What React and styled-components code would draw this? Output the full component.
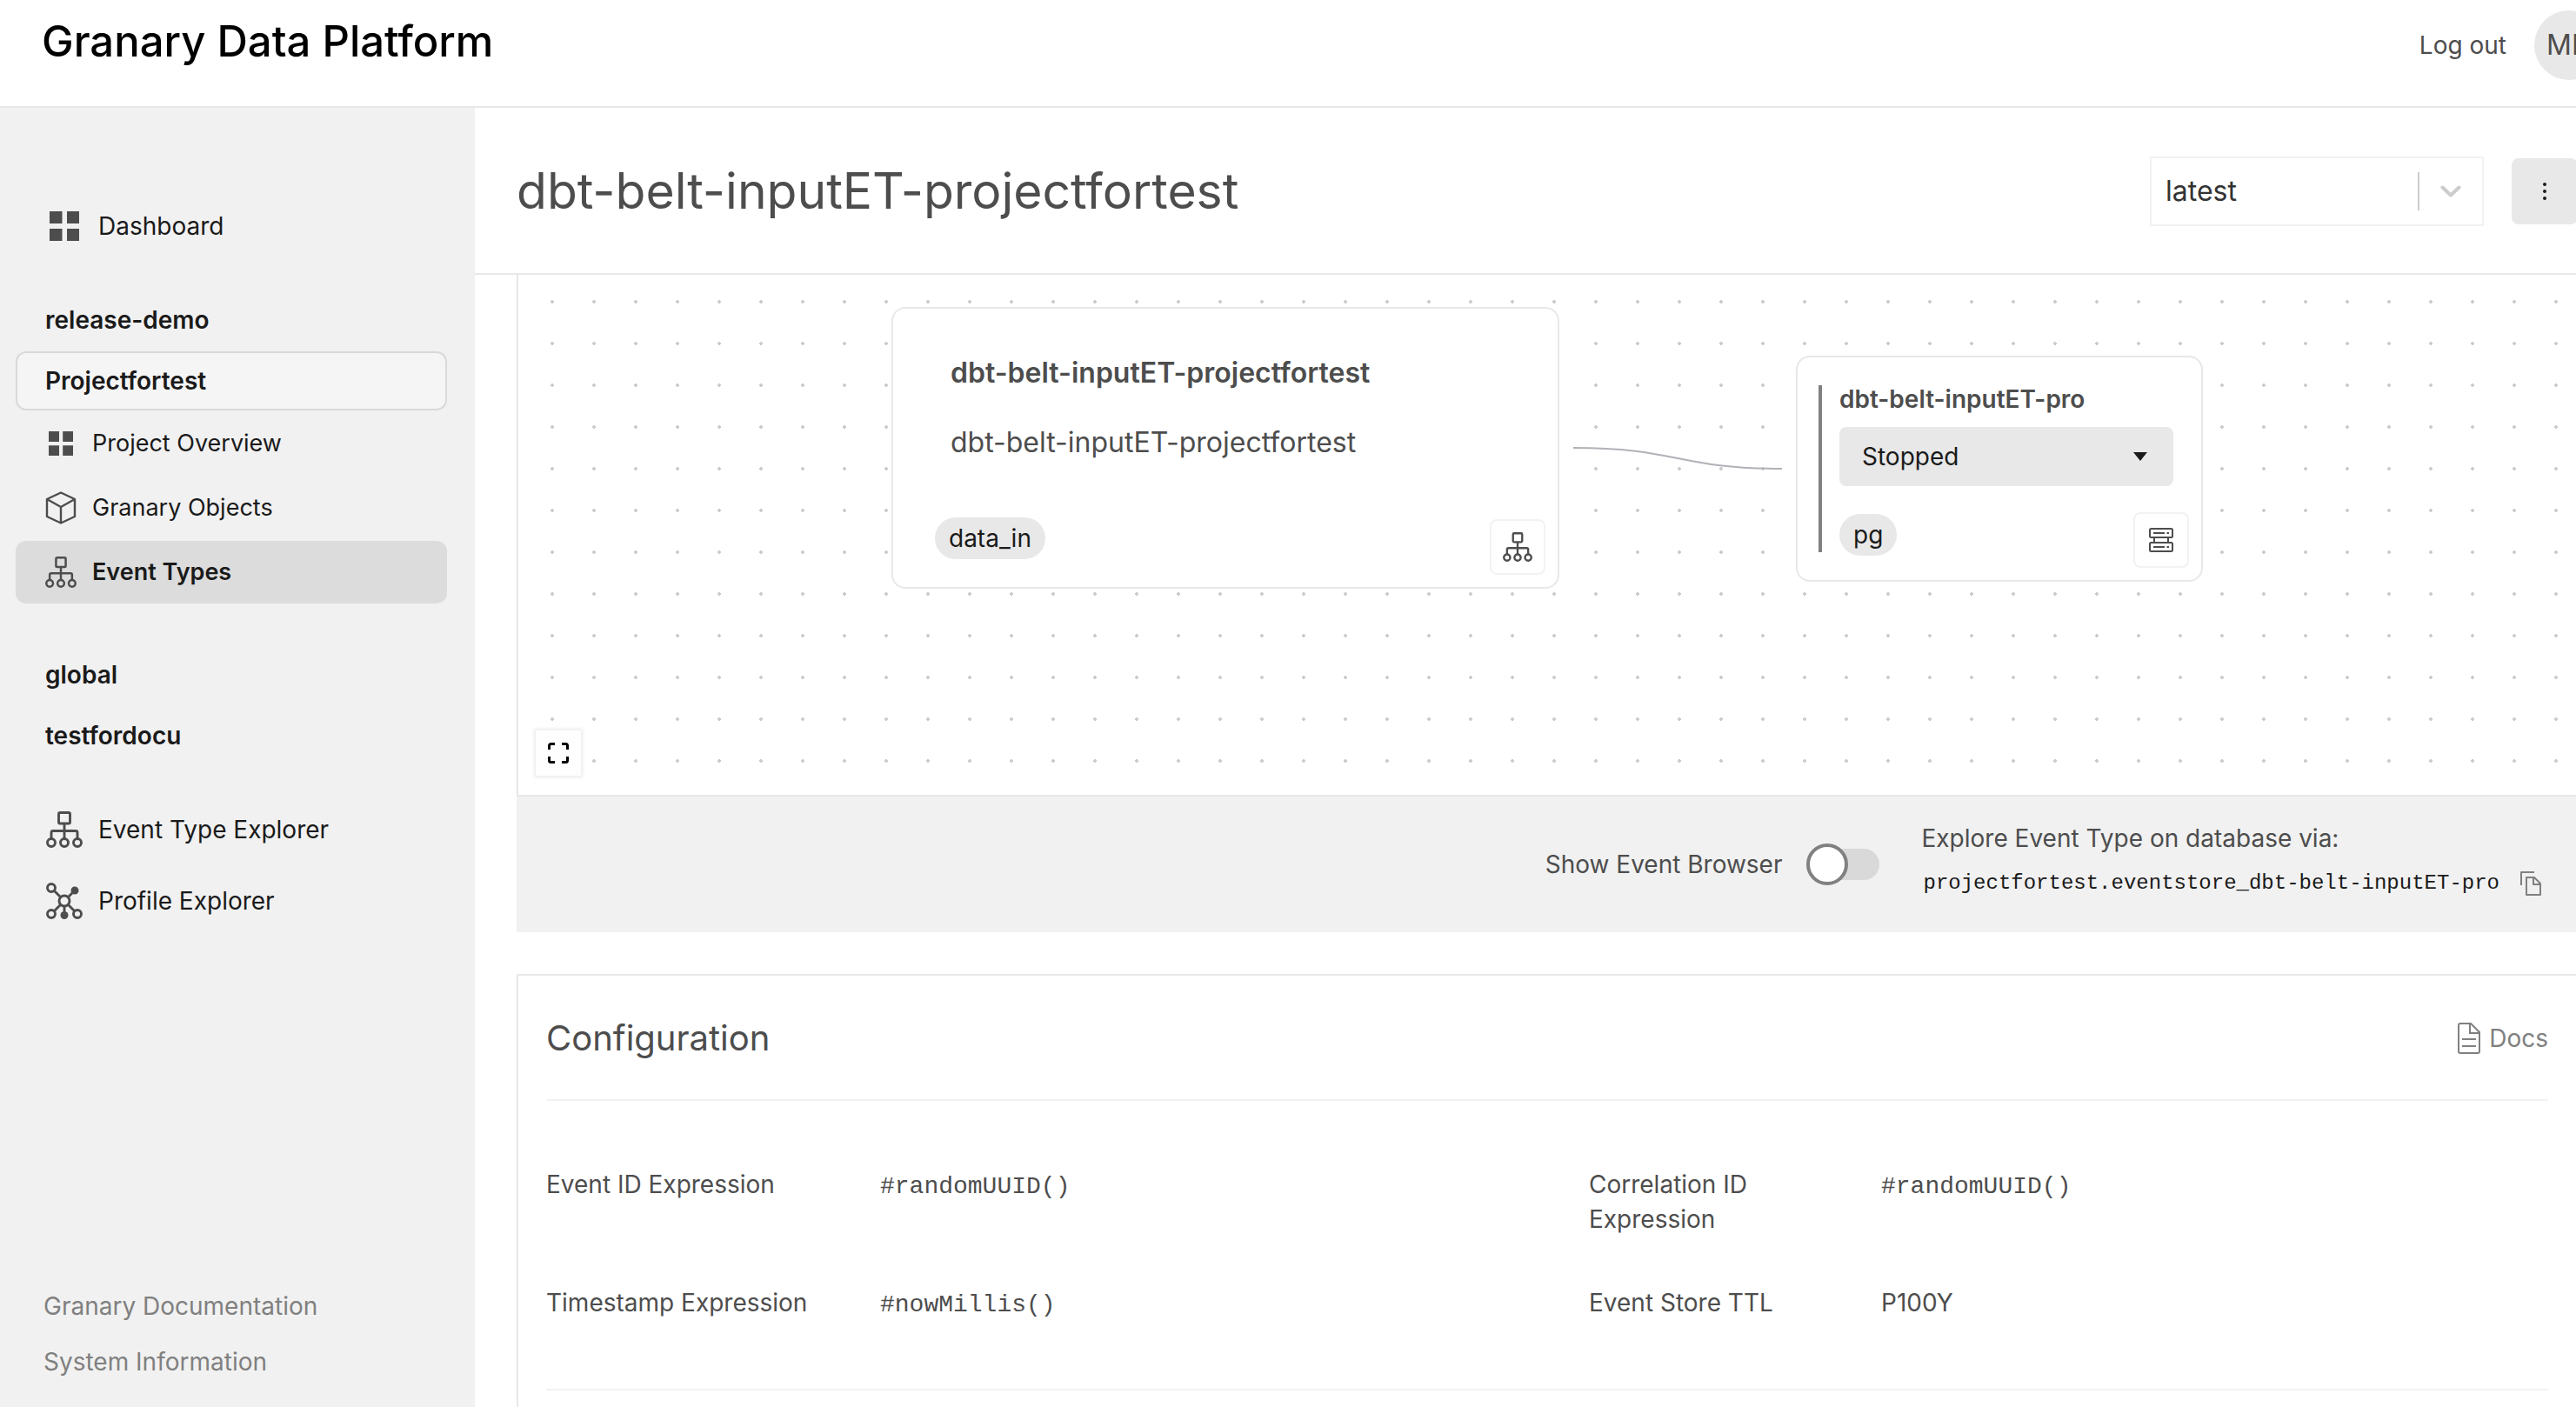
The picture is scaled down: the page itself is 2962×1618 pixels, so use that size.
import React, { useState } from "react";
import styled, { createGlobalStyle, css } from "styled-components";

const GlobalStyle = createGlobalStyle`
  *, *::before, *::after { box-sizing: border-box; }
  body {
    margin: 0;
    overflow: hidden;
    background: #fff;
    color: #4d4d4d;
    font-family: Inter, "Liberation Sans", sans-serif;
    font-size: 28px;
    line-height: 40px;
  }
  h1, h2, h3, p, ul, dl, dd { margin: 0; padding: 0; }
  ul { list-style: none; }
  a { color: inherit; text-decoration: none; }
  button, select, input { font: inherit; color: inherit; margin: 0; }
  svg { display: block; flex: none; }
`;

/* The workspace is slightly wider than the window and runs off its right side. */
const Shell = styled.div`
  display: flex;
  flex-direction: column;
  width: calc(100% + 50px);
  height: 100vh;
  overflow: hidden;
`;

const Header = styled.header`
  display: flex;
  align-items: flex-start;
  justify-content: space-between;
  height: 124px;
  padding: 12px 18px 0 48px;
  border-bottom: 2px solid #e8e8e8;
`;

const Brand = styled.a`
  color: #000;
  font-size: 49px;
  font-weight: 500;
  line-height: 72px;
`;

const Account = styled.div`
  display: flex;
  align-items: center;
  gap: 32px;
`;

const TextButton = styled.button`
  padding: 0;
  border: 0;
  background: none;
  cursor: pointer;
`;

const Avatar = styled.div`
  display: flex;
  align-items: center;
  width: 80px;
  height: 80px;
  padding-left: 14px;
  border-radius: 50%;
  background: #e8e8e8;
  font-size: 32px;
`;

const Body = styled.div`
  display: flex;
  flex: 1;
  min-height: 0;
`;

const Sidebar = styled.nav`
  display: flex;
  flex: none;
  flex-direction: column;
  width: 546px;
  padding: 96px 32px 20px 18px;
  background: #f1f1f1;
  color: #1a1a1a;
`;

const NavList = styled.ul`
  display: flex;
  flex-direction: column;
  gap: 2px;
  margin-top: ${(p) => p.$space || 0}px;
`;

const MainLink = styled.a`
  display: flex;
  align-items: center;
  gap: 18px;
  height: 80px;
  padding-left: 35px;

  svg { width: 42px; color: #4d4d4d; }
`;

const ProjectLink = styled.a`
  display: flex;
  align-items: center;
  height: 68px;
  padding-left: 32px;
  border: 2px solid transparent;
  border-radius: 12px;
  font-weight: 600;
  ${(p) => p.$open && css`
    border-color: #d9d9d9;
    background: #f5f5f5;
  `}
`;

const SubLink = styled.a`
  display: flex;
  align-items: center;
  gap: 18px;
  height: 72px;
  padding-left: 34px;
  border-radius: 12px;
  font-size: 27px;
  ${(p) => p.$active && css`
    background: #dcdcdc;
    font-weight: 600;
  `}

  svg { width: 36px; color: #4d4d4d; }
`;

const FooterLinks = styled.ul`
  margin-top: auto;
  padding-left: 32px;
  color: #808080;
  line-height: 64px;
`;

const Main = styled.main`
  display: flex;
  flex: 1;
  flex-direction: column;
  min-width: 0;
`;

const TitleBar = styled.div`
  display: flex;
  flex: none;
  align-items: center;
  gap: 32px;
  height: 192px;
  padding: 2px 48px 0;
  border-bottom: 2px solid #e8e8e8;
`;

const PageTitle = styled.h1`
  flex: 1;
  font-size: 57px;
  font-weight: 400;
  line-height: 72px;
`;

const Picker = styled.div`
  display: grid;
  align-items: center;
  width: 384px;

  > * { grid-area: 1 / 1; }
`;

const PickerSelect = styled.select`
  width: 100%;
  border: ${(p) => (p.$filled ? "0" : "2px solid #f2f2f2")};
  border-radius: ${(p) => (p.$filled ? 8 : 0)}px;
  padding: 0 ${(p) => (p.$filled ? 26 : 16)}px;
  height: ${(p) => (p.$filled ? 68 : 80)}px;
  background: ${(p) => (p.$filled ? "#e8e8e8" : "#fff")};
  color: ${(p) => (p.$filled ? "#1a1a1a" : "#333")};
  font-size: ${(p) => (p.$filled ? 28 : 32)}px;
  appearance: none;
`;

const PickerMark = styled.span`
  display: flex;
  align-items: center;
  justify-self: end;
  height: 44px;
  padding: 0 ${(p) => (p.$filled ? 30 : 26)}px 0 24px;
  border-left: ${(p) => (p.$filled ? "0" : "2px solid #ccc")};
  pointer-events: none;
`;

const MoreButton = styled.button`
  display: flex;
  align-items: center;
  justify-content: center;
  width: 76px;
  height: 76px;
  padding: 0;
  border: 0;
  border-radius: 8px;
  background: #e8e8e8;
  color: #1a1a1a;
`;

const Content = styled.div`
  display: flex;
  flex: 1;
  flex-direction: column;
  gap: 48px;
  min-height: 0;
  padding: 0 48px;
`;

const FlowPanel = styled.section`
  flex: none;
`;

const Canvas = styled.div`
  position: relative;
  height: 600px;
  border: 2px solid #e8e8e8;
  border-top: 0;
  background: radial-gradient(circle, #ccc 2px, transparent 2px) 15px 7px / 48px 48px;
`;

const Edge = styled.svg`
  position: absolute;
  top: 198px;
  left: 1213px;
`;

const Node = styled.article`
  position: absolute;
  top: ${(p) => p.$y}px;
  left: ${(p) => p.$x}px;
  display: flex;
  flex-direction: column;
  width: ${(p) => p.$w}px;
  border: 2px solid #e8e8e8;
  border-radius: 16px;
  background: #fff;
`;

const SourceNode = styled(Node)`
  padding: 50px 14px 14px 48px;
`;

const SourceText = styled.div`
  display: flex;
  flex-direction: column;
  gap: 32px;
  padding: 0 18px;
  font-size: 32px;
  line-height: 48px;
`;

const SourceTitle = styled.h3`
  font-size: 32px;
  font-weight: 600;
  line-height: 48px;
`;

const SourceFoot = styled.div`
  display: flex;
  align-items: flex-end;
  justify-content: space-between;
  height: 66px;
  margin-top: 62px;
`;

const TargetNode = styled(Node)`
  padding: 32px 14px 14px 24px;
`;

const TargetBody = styled.div`
  display: flex;
  flex-direction: column;
  gap: 12px;
  padding-left: 24px;
  background: linear-gradient(#808080, #808080) left top / 4px 192px no-repeat;
`;

const TargetTitle = styled.h3`
  padding-bottom: 4px;
  font-size: 28px;
  font-weight: 600;
  line-height: 32px;
`;

const Chip = styled.span`
  display: flex;
  align-items: center;
  align-self: flex-start;
  height: 48px;
  padding: 0 16px;
  border-radius: 24px;
  background: #e8e8e8;
  color: #1a1a1a;
`;

const TargetFoot = styled.div`
  display: flex;
  justify-content: space-between;
  margin-top: 18px;

  ${Chip} { margin-top: 2px; }
`;

const NodeButton = styled.button`
  display: flex;
  align-items: center;
  justify-content: center;
  width: 64px;
  height: 64px;
  padding: 0;
  border: 2px solid #f2f2f2;
  border-radius: 8px;
  background: #fff;
`;

const FitButton = styled.button`
  position: absolute;
  bottom: 22px;
  left: 20px;
  display: flex;
  align-items: center;
  justify-content: center;
  width: 52px;
  height: 52px;
  padding: 0;
  border: 0;
  background: #fefefe;
  box-shadow: 0 0 4px 2px rgba(0, 0, 0, 0.08);
  color: #000;
`;

const AccessBar = styled.div`
  display: flex;
  align-items: center;
  justify-content: flex-end;
  gap: 48px;
  height: 156px;
  padding-right: 42px;
  background: #f1f1f1;
`;

const ToggleLabel = styled.label`
  display: flex;
  align-items: center;
  gap: 28px;
`;

const Toggle = styled.input`
  display: grid;
  align-items: center;
  width: 84px;
  height: 48px;
  appearance: none;

  &::before, &::after { content: ""; grid-area: 1 / 1; }
  &::before {
    height: 36px;
    margin-left: 8px;
    border-radius: 18px;
    background: #d9d9d9;
  }
  &::after {
    width: 48px;
    height: 48px;
    border: 4px solid #808080;
    border-radius: 50%;
    background: #fff;
  }
  &:checked::after { justify-self: end; }
`;

const Access = styled.div`
  display: flex;
  flex-direction: column;
  gap: 12px;
  padding-bottom: 8px;
`;

const AccessPath = styled.div`
  display: flex;
  align-items: center;
  gap: 24px;
  padding-left: 2px;
  color: #1a1a1a;
`;

const Code = styled.code`
  font-family: "Liberation Mono", monospace;
  font-size: ${(p) => (p.$small ? 24 : 28)}px;
`;

const CopyButton = styled(TextButton)`
  color: #808080;
`;

const Card = styled.section`
  flex: 1 0 auto;
  padding: 0 32px;
  border: 2px solid #e8e8e8;
  border-bottom: 0;
`;

const CardHead = styled.div`
  display: flex;
  align-items: center;
  justify-content: space-between;
  height: 144px;
  padding-top: 2px;
  border-bottom: 2px solid #f2f2f2;
`;

const CardTitle = styled.h2`
  font-size: 40px;
  font-weight: 400;
  line-height: 56px;
`;

const DocsLink = styled.a`
  display: flex;
  align-items: center;
  gap: 10px;
  color: #808080;
`;

const Settings = styled.dl`
  display: grid;
  grid-template-columns: 1fr 1fr;
  gap: 56px 96px;
  padding: 76px 0;
  border-bottom: 2px solid #f2f2f2;
`;

const Setting = styled.div`
  display: flex;
  align-items: flex-start;
`;

const SettingName = styled.dt`
  flex: none;
  width: ${(p) => (p.$wide ? 384 : 336)}px;
  padding-right: 48px;
`;

const GridIcon = () => (
  <svg height="34" viewBox="0 0 34 34" fill="currentColor" aria-hidden="true">
    <path d="M0 0h14.500v14H0zM20 0h14v14H20zM0 20h14.500v14H0zM20 20h14v14H20z" />
  </svg>
);

const SmallGridIcon = () => (
  <svg height="28" viewBox="0 0 28 28" fill="currentColor" aria-hidden="true">
    <path d="M0 0h12v12H0zM16.200 0H28v12H16.200zM0 16.200h12V28H0zM16.200 16.200H28V28H16.200z" />
  </svg>
);

const CubeIcon = () => (
  <svg height="38" viewBox="0 0 36 38" fill="none" stroke="currentColor" strokeWidth="2.400" strokeLinejoin="round" aria-hidden="true">
    <path d="M18 1.500 34 9v20l-16 7.500L2 29V9zM2 9l16 9 16-9M18 18v18.500" />
  </svg>
);

const TreeIcon = ({ size = 42 }) => (
  <svg width={size} height={size} viewBox="0 0 42 42" fill="none" stroke="currentColor" strokeWidth="2.900" aria-hidden="true">
    <rect x="14.500" y="1.500" width="13" height="12.500" rx="1.500" />
    <path d="M21 14v17M6 31v-6.500a2 2 0 0 1 2-2h26a2 2 0 0 1 2 2V31" />
    <circle cx="6" cy="36" r="4.500" />
    <circle cx="21" cy="36" r="4.500" />
    <circle cx="36" cy="36" r="4.500" />
  </svg>
);

const HubIcon = () => (
  <svg height="42" viewBox="0 0 42 42" fill="none" stroke="currentColor" strokeWidth="2.900" aria-hidden="true">
    <circle cx="21" cy="21" r="6" />
    <circle cx="6" cy="6" r="4.500" />
    <circle cx="6" cy="36" r="4.500" />
    <circle cx="36" cy="36" r="4.500" />
    <path d="m9 9 8 8M32 10l-7 7M17 25l-8 8M25 25l8 8M21 27v9" />
    <circle cx="33" cy="9" r="4.500" fill="currentColor" stroke="none" />
    <circle cx="21" cy="37.500" r="4.500" fill="currentColor" stroke="none" />
  </svg>
);

const ServerIcon = () => (
  <svg width="28" height="28" viewBox="0 0 28 28" fill="none" stroke="currentColor" strokeWidth="2" aria-hidden="true">
    <rect x="1" y="1" width="26" height="10" rx="1.500" />
    <rect x="1" y="17" width="26" height="10" rx="1.500" />
    <path d="M6 11v6M22 11v6M5 6h13M20.500 6h2.500M5 22h13M20.500 22h2.500" />
  </svg>
);

const FitIcon = () => (
  <svg width="24" height="24" viewBox="0 0 24 24" fill="none" stroke="currentColor" strokeWidth="3" aria-hidden="true">
    <path d="M1.500 8V3.500a2 2 0 0 1 2-2H8M16 1.500h4.500a2 2 0 0 1 2 2V8M22.500 16v4.500a2 2 0 0 1-2 2H16M8 22.500H3.500a2 2 0 0 1-2-2V16" />
  </svg>
);

const DotsIcon = () => (
  <svg width="4" height="20" viewBox="0 0 4 20" fill="currentColor" aria-hidden="true">
    <circle cx="2" cy="2" r="2" />
    <circle cx="2" cy="10" r="2" />
    <circle cx="2" cy="18" r="2" />
  </svg>
);

const ChevronIcon = () => (
  <svg width="24" height="14" viewBox="0 0 24 14" fill="none" stroke="#ccc" strokeWidth="4" strokeLinecap="round" strokeLinejoin="round" aria-hidden="true">
    <path d="m2.500 2.500 9.500 9 9.500-9" />
  </svg>
);

const TriangleIcon = () => (
  <svg width="16" height="10" viewBox="0 0 16 10" fill="#1a1a1a" aria-hidden="true">
    <path d="M0 0h16L8 10z" />
  </svg>
);

const CopyIcon = () => (
  <svg width="24" height="28" viewBox="0 0 24 28" fill="none" stroke="currentColor" strokeWidth="2" strokeLinejoin="round" aria-hidden="true">
    <path d="M1 16V1h15" />
    <path d="M7 7h9l7 7v13H7zM15 7v8h8" />
  </svg>
);

const DocIcon = () => (
  <svg width="26" height="36" viewBox="0 0 26 36" fill="none" stroke="currentColor" strokeWidth="2" aria-hidden="true">
    <path d="M1 3a2 2 0 0 1 2-2h12l10 10v22a2 2 0 0 1-2 2H3a2 2 0 0 1-2-2zM14 1v11h11M5 19h16M5 27h16" />
  </svg>
);

const SETTINGS = [
  { name: "Event ID Expression", value: "#randomUUID()", code: true },
  { name: "Correlation ID Expression", value: "#randomUUID()", code: true },
  { name: "Timestamp Expression", value: "#nowMillis()", code: true },
  { name: "Event Store TTL", value: "P100Y" },
];

export default function App() {
  const [browser, setBrowser] = useState(false);

  return (
    <>
      <GlobalStyle />
      <Shell>
        <Header>
          <Brand href="#">Granary Data Platform</Brand>
          <Account>
            <TextButton type="button">Log out</TextButton>
            <Avatar>MI</Avatar>
          </Account>
        </Header>

        <Body>
          <Sidebar>
            <NavList>
              <li><MainLink href="#dashboard"><GridIcon />Dashboard</MainLink></li>
            </NavList>
            <NavList $space={34}>
              <li><ProjectLink href="#release-demo">release-demo</ProjectLink></li>
              <li><ProjectLink href="#projectfortest" $open>Projectfortest</ProjectLink></li>
              <li><SubLink href="#overview"><SmallGridIcon />Project Overview</SubLink></li>
              <li><SubLink href="#objects"><CubeIcon />Granary Objects</SubLink></li>
              <li><SubLink href="#event-types" $active><TreeIcon size={36} />Event Types</SubLink></li>
            </NavList>
            <NavList $space={48}>
              <li><ProjectLink href="#global">global</ProjectLink></li>
              <li><ProjectLink href="#testfordocu">testfordocu</ProjectLink></li>
            </NavList>
            <NavList $space={34}>
              <li><MainLink href="#event-explorer"><TreeIcon />Event Type Explorer</MainLink></li>
              <li><MainLink href="#profile-explorer"><HubIcon />Profile Explorer</MainLink></li>
            </NavList>
            <FooterLinks>
              <li><a href="#docs">Granary Documentation</a></li>
              <li><a href="#system">System Information</a></li>
            </FooterLinks>
          </Sidebar>

          <Main>
            <TitleBar>
              <PageTitle>dbt-belt-inputET-projectfortest</PageTitle>
              <Picker>
                <PickerSelect aria-label="Version"><option>latest</option></PickerSelect>
                <PickerMark><ChevronIcon /></PickerMark>
              </Picker>
              <MoreButton type="button" aria-label="More actions"><DotsIcon /></MoreButton>
            </TitleBar>

            <Content>
              <FlowPanel>
                <Canvas>
                  <Edge width="240" height="28" viewBox="0 0 240 28" fill="none" stroke="#b1b1b7" strokeWidth="2" aria-hidden="true">
                    <path d="M0 1C120 1 120 25 240 25" />
                  </Edge>
                  <SourceNode $x={429} $y={37} $w={768}>
                    <SourceText>
                      <SourceTitle>dbt-belt-inputET-projectfortest</SourceTitle>
                      <p>dbt-belt-inputET-projectfortest</p>
                    </SourceText>
                    <SourceFoot>
                      <Chip>data_in</Chip>
                      <NodeButton type="button" aria-label="Event type"><TreeIcon size={34} /></NodeButton>
                    </SourceFoot>
                  </SourceNode>
                  <TargetNode $x={1469} $y={93} $w={468}>
                    <TargetBody>
                      <TargetTitle>dbt-belt-inputET-pro</TargetTitle>
                      <Picker>
                        <PickerSelect $filled aria-label="Status"><option>Stopped</option></PickerSelect>
                        <PickerMark $filled><TriangleIcon /></PickerMark>
                      </Picker>
                      <TargetFoot>
                        <Chip>pg</Chip>
                        <NodeButton type="button" aria-label="Storage"><ServerIcon /></NodeButton>
                      </TargetFoot>
                    </TargetBody>
                  </TargetNode>
                  <FitButton type="button" aria-label="Fit view"><FitIcon /></FitButton>
                </Canvas>
                <AccessBar>
                  <ToggleLabel>
                    Show Event Browser
                    <Toggle type="checkbox" checked={browser} onChange={(e) => setBrowser(e.target.checked)} />
                  </ToggleLabel>
                  <Access>
                    <p>Explore Event Type on database via:</p>
                    <AccessPath>
                      <Code $small>projectfortest.eventstore_dbt-belt-inputET-pro</Code>
                      <CopyButton type="button" aria-label="Copy"><CopyIcon /></CopyButton>
                    </AccessPath>
                  </Access>
                </AccessBar>
              </FlowPanel>

              <Card>
                <CardHead>
                  <CardTitle>Configuration</CardTitle>
                  <DocsLink href="#configuration-docs"><DocIcon />Docs</DocsLink>
                </CardHead>
                <Settings>
                  {SETTINGS.map((s, i) => (
                    <Setting key={s.name}>
                      <SettingName $wide={i % 2 === 0}>{s.name}</SettingName>
                      <dd>{s.code ? <Code>{s.value}</Code> : s.value}</dd>
                    </Setting>
                  ))}
                </Settings>
              </Card>
            </Content>
          </Main>
        </Body>
      </Shell>
    </>
  );
}
